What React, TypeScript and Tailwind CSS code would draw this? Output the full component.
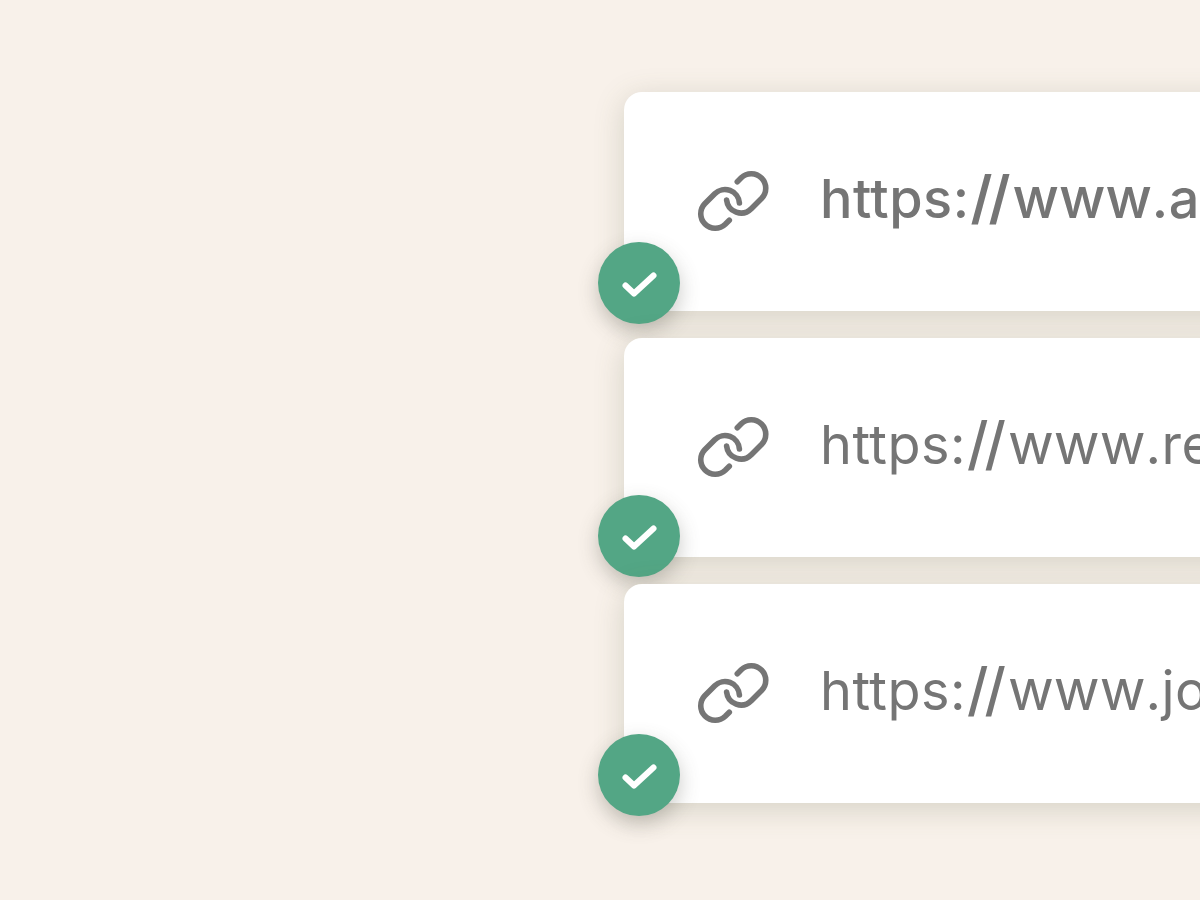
const LinkIcon = () => (
  <svg width="72" height="62" viewBox="0 0 72 62" fill="none" stroke="#757575" strokeWidth="5.6" strokeLinecap="round" strokeLinejoin="round" className="mt-[8px] shrink-0">
    <path d="M32.3 50.2 L28.25 54.25 A14.5 14.5 0 0 1 7.75 33.75 L17.75 23.75 A14.5 14.5 0 0 1 42.4 33" />
    <path d="M40.3 11.7 L44.25 7.75 A14.5 14.5 0 0 1 64.75 28.25 L54.25 38.75 A14.5 14.5 0 0 1 29.6 30" />
  </svg>
);

const Check = () => (
  <svg width="38" height="30" viewBox="0 0 38 30" fill="none" stroke="#ffffff" strokeWidth="6" strokeLinecap="round" strokeLinejoin="round">
    <path d="M5.5 17.5 L14 25.5 L33.5 7.5" />
  </svg>
);

const Row = ({ host, weight, slash, badge }: { host: string; weight: string; slash: string; badge: string }) => (
  <div className="relative flex h-[219px] w-[760px] shrink-0 items-center rounded-[18px] bg-white pb-[10px] pl-[73px] shadow-[0_6px_30px_rgba(90,100,70,0.22)]">
    <LinkIcon />
    <span className={`ml-[51px] font-['Inter',sans-serif] text-[54px] leading-none tracking-[0.5px] whitespace-nowrap text-[#757575] ${weight}`}>
      https:<span className={`ml-[1px] text-[58px] leading-none tracking-[-4px] ${slash}`}>//</span><span className="ml-[6px] text-[56px] leading-none tracking-[0px]">www</span>.{host}
    </span>
    <div className={`absolute left-[-26px] ${badge} flex h-[82px] w-[82px] items-center justify-center rounded-full bg-[#53a685] shadow-[0_8px_20px_rgba(80,80,70,0.3)]`}>
      <Check />
    </div>
  </div>
);

export default function App() {
  return (
    <div className="flex h-[900px] w-[1200px] flex-col gap-[27px] overflow-hidden bg-[#f8f1ea] pt-[92px] pl-[624px]">
      <Row host="adobe.com" weight="font-medium" slash="font-semibold" badge="top-[150px]" />
      <Row host="reddit.com" weight="font-normal" slash="font-medium" badge="top-[157px]" />
      <Row host="jotform.com" weight="font-normal" slash="font-medium" badge="top-[150px]" />
    </div>
  );
}
